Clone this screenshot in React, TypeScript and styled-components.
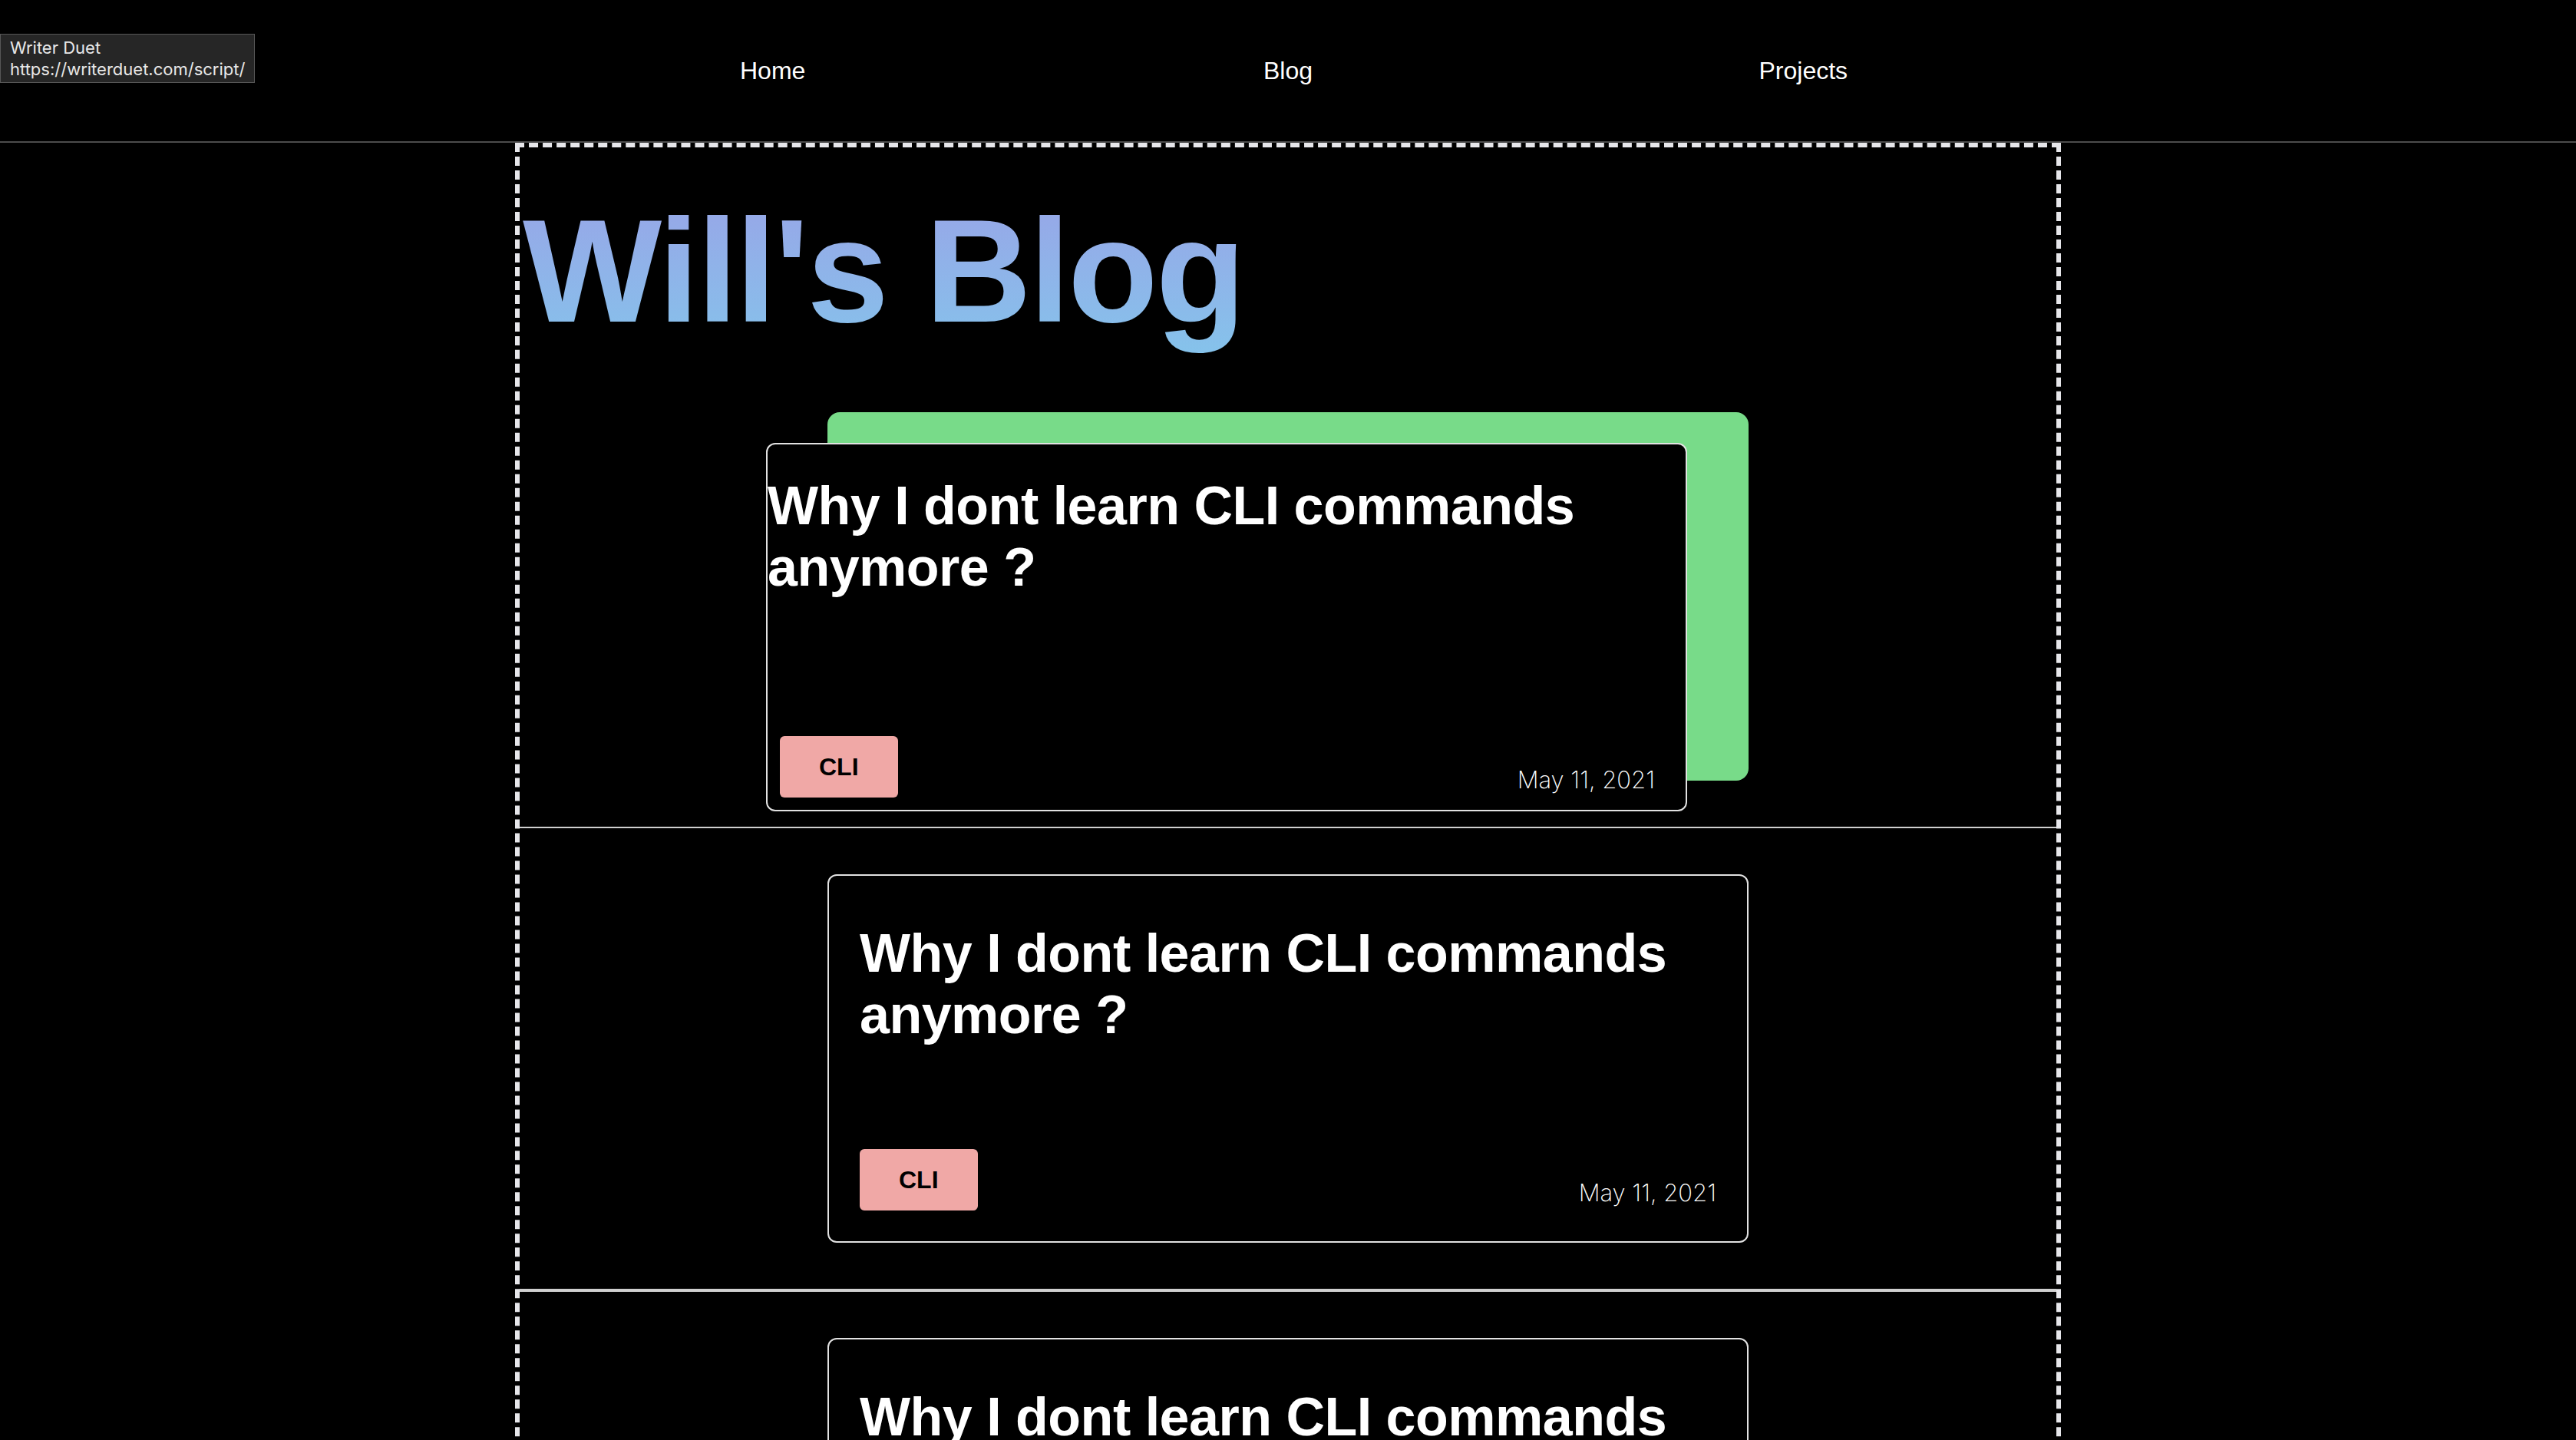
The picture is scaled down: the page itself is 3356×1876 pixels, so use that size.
import React from 'react';
import styled, { createGlobalStyle } from 'styled-components';

const GlobalStyle = createGlobalStyle`
  html, body {
    margin: 0;
    padding: 0;
    background: #000;
    color: #fff;
    font-family: "Liberation Sans", Arial, sans-serif;
  }
  * {
    box-sizing: border-box;
  }
`;

const Tooltip = styled.div`
  position: absolute;
  top: 44px;
  left: 0;
  z-index: 10;
  padding: 3px 12px 3px 12px;
  background: #262626;
  border: 1px solid #565656;
  color: #e8e8e8;
  font-family: Inter, "Liberation Sans", sans-serif;
  font-size: 22px;
  line-height: 28px;
`;

const NavBar = styled.nav`
  height: 186px;
  border-bottom: 2px solid #4c4c4c;
  display: flex;
  justify-content: center;
  align-items: center;
`;

const NavList = styled.ul`
  width: 2014px;
  margin: 0;
  padding: 0;
  list-style: none;
  display: grid;
  grid-template-columns: repeat(3, 1fr);
  align-items: center;
`;

const NavItem = styled.li`
  text-align: center;
  font-size: 32px;
  color: #fff;
`;

const Main = styled.main`
  width: 2014px;
  margin: 0 auto;
  border: 6px dashed #e6e6ea;
  border-bottom: none;
`;

const PageTitle = styled.h1`
  margin: 50px 0 14px;
  padding-left: 4px;
  font-size: 192px;
  font-weight: 700;
  line-height: 221px;
  letter-spacing: -3px;
  background: linear-gradient(180deg, #95aae8 20%, #85c3eb 100%);
  -webkit-background-clip: text;
  background-clip: text;
  color: transparent;
`;

const PostSection = styled.section<{ $thick?: boolean }>`
  padding: 60px 0;
  border-bottom: ${p => (p.$thick ? '4px' : '2px')} solid #cfcfcf;
  display: flex;
  justify-content: center;
`;

const CardBackdrop = styled.div<{ $active?: boolean }>`
  width: 1200px;
  height: 480px;
  border-radius: 16px;
  background: ${p => (p.$active ? '#78db89' : 'transparent')};
`;

const Card = styled.article<{ $active?: boolean }>`
  width: 1200px;
  height: 480px;
  border: 2px solid #e2e2e2;
  border-radius: 12px;
  background: #000;
  display: flex;
  flex-direction: column;
  justify-content: space-between;
  padding: ${p => (p.$active ? '40px 40px 16px 0' : '40px')};
  transform: ${p => (p.$active ? 'translate(-80px, 40px)' : 'none')};
`;

const CardTitle = styled.h2<{ $active?: boolean }>`
  margin: ${p => (p.$active ? '0' : '21px 0 0')};
  font-size: 70px;
  font-weight: 700;
  line-height: 80px;
  letter-spacing: -0.5px;
  color: #fff;
`;

const CardFooter = styled.div<{ $active?: boolean }>`
  display: flex;
  justify-content: space-between;
  align-items: flex-end;
  padding-left: ${p => (p.$active ? '16px' : '0')};
`;

const Tag = styled.span`
  height: 80px;
  padding: 0 51px;
  display: flex;
  align-items: center;
  border-radius: 6px;
  background: #f0a8a6;
  color: #000;
  font-size: 32px;
  font-weight: 700;
`;

const PostDate = styled.time`
  margin-bottom: 5px;
  font-family: Inter, "Liberation Sans", sans-serif;
  font-weight: 200;
  font-size: 31px;
  line-height: 37px;
  color: #fff;
`;

const posts = [
  { title: 'Why I dont learn CLI commands anymore ?', tag: 'CLI', date: 'May 11, 2021' },
  { title: 'Why I dont learn CLI commands anymore ?', tag: 'CLI', date: 'May 11, 2021' },
  { title: 'Why I dont learn CLI commands anymore ?', tag: 'CLI', date: 'May 11, 2021' },
];

const App: React.FC = () => {
  return (
    <>
      <GlobalStyle />
      <Tooltip>
        Writer Duet
        <br />
        https://writerduet.com/script/
      </Tooltip>
      <NavBar>
        <NavList>
          <NavItem>Home</NavItem>
          <NavItem>Blog</NavItem>
          <NavItem>Projects</NavItem>
        </NavList>
      </NavBar>
      <Main>
        <PageTitle>Will's Blog</PageTitle>
        {posts.map((post, i) => {
          const active = i === 0;
          return (
            <PostSection key={i} $thick={i === 1}>
              <CardBackdrop $active={active}>
                <Card $active={active}>
                  <CardTitle $active={active}>{post.title}</CardTitle>
                  <CardFooter $active={active}>
                    <Tag>{post.tag}</Tag>
                    <PostDate>{post.date}</PostDate>
                  </CardFooter>
                </Card>
              </CardBackdrop>
            </PostSection>
          );
        })}
      </Main>
    </>
  );
};

export default App;
